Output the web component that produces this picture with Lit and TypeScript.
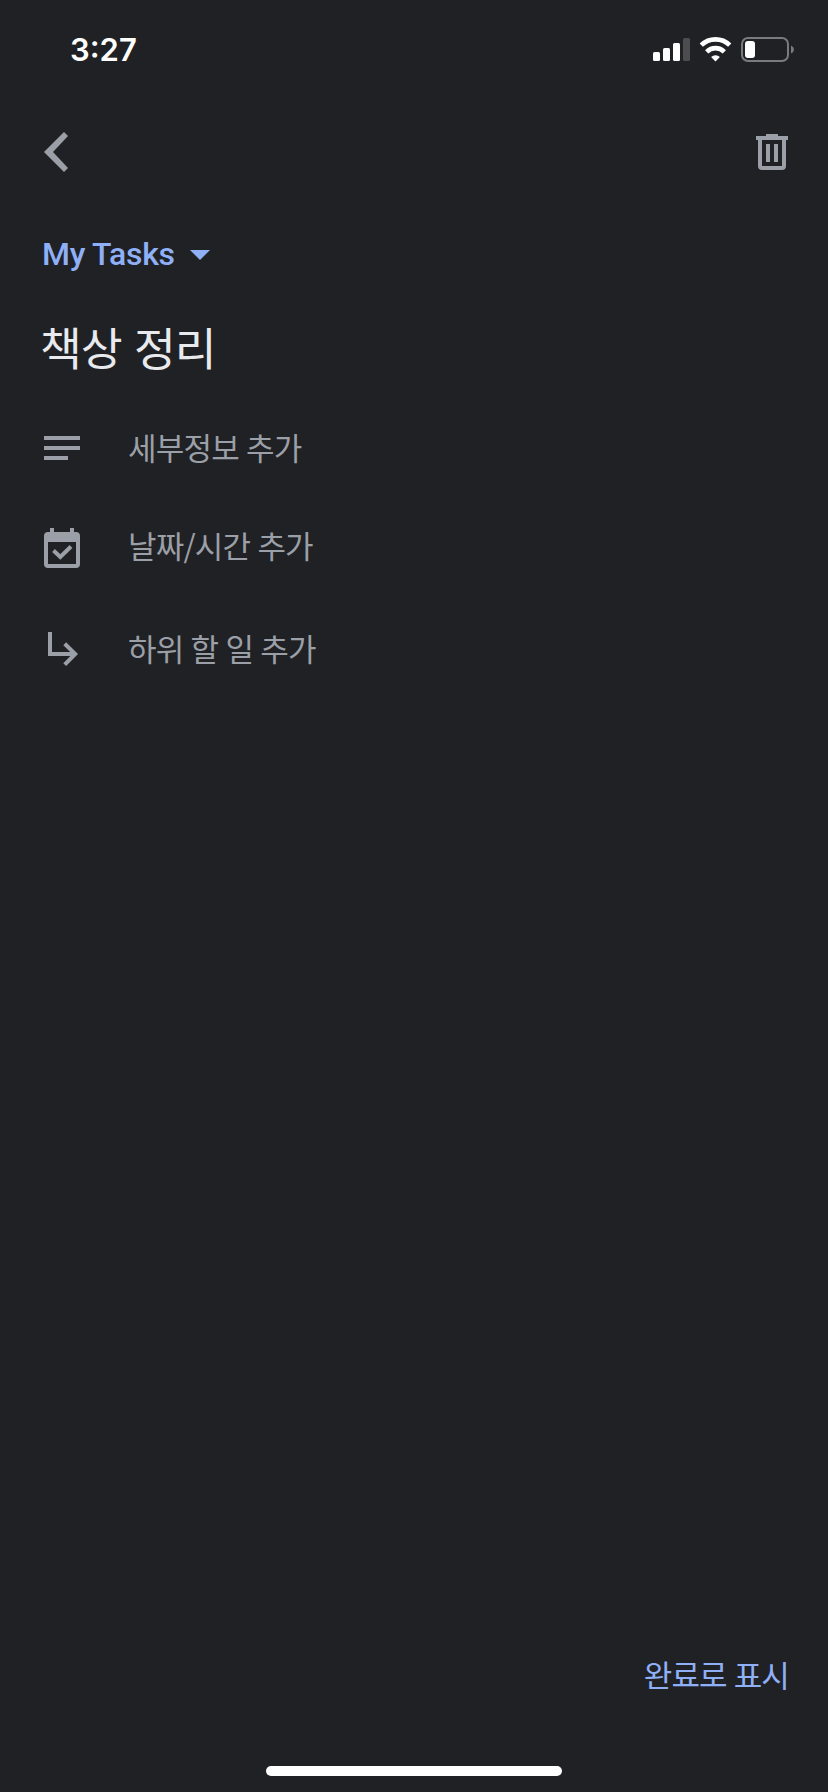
import { LitElement, html, css, svg } from "lit";
import { customElement } from "lit/decorators.js";

const detailsIcon = svg`<path d="M0 8h36v4H0zM0 18h36v4H0zM0 28h24v4H0z"/>`;
const dateIcon = svg`<path fill-rule="evenodd" d="M6 0h4v4h16V0h4v4h2a4 4 0 0 1 4 4v28a4 4 0 0 1-4 4H4a4 4 0 0 1-4-4V8a4 4 0 0 1 4-4h2zM4 14v22h28V14z"/><path class="line" d="M9.5 22.5l6.8 6.4L27 18.5"/>`;
const subtaskIcon = svg`<path class="line" d="M6 4v22h25M20.7 15.7L31.2 26 20.7 36.6"/>`;

@customElement("app-root")
export class AppRoot extends LitElement {
  static styles = css`
    :host {
      display: flex;
      flex-direction: column;
      box-sizing: border-box;
      height: 1792px;
      width: 828px;
      background: #202124;
      color: #9aa0a6;
      font-family: Inter, "Noto Sans CJK KR", sans-serif;
    }
    * { box-sizing: border-box; }
    svg { display: block; fill: currentColor; overflow: visible; }
    .line { fill: none; stroke: currentColor; stroke-width: 4; }
    button {
      border: 0; padding: 0; margin: 0; background: none;
      color: #9b9fa7; font: inherit; display: block; text-align: left;
    }
    .status {
      height: 100px; display: flex; justify-content: space-between;
      padding: 30px 34px 0 70px; color: #fff;
    }
    .time { font-size: 31px; font-weight: 600; line-height: 40px; }
    .status svg { margin-top: 7px; }
    .bar {
      height: 104px; display: flex; justify-content: space-between;
      align-items: center; padding: 0 40px 0 44px;
    }
    .list {
      height: 100px; display: flex; align-items: center; gap: 16px;
      padding-left: 42px; color: #8fb0f6;
      font-family: "Google Sans", Roboto, sans-serif;
      font-size: 32px; font-weight: 500; letter-spacing: -0.3px; white-space: nowrap;
    }
    .list span { width: 132px; }
    .list svg { margin-top: 2px; }
    h1 {
      margin: 0; height: 94px; padding-left: 40px; color: #e8eaed;
      font-family: "Noto Sans CJK KR", sans-serif;
      font-weight: 400; font-size: 45.5px; line-height: 85px; letter-spacing: -1px;
      word-spacing: 3px; white-space: pre;
    }
    .row {
      display: flex; align-items: center; gap: 48px; padding-left: 44px;
      height: 100px; width: 100%; font-family: "Noto Sans CJK KR", sans-serif;
      font-size: 31px; line-height: 44px; letter-spacing: -0.8px; word-spacing: 1px; white-space: pre;
    }
    .details span { padding-bottom: 3px; }
    .date span { padding-bottom: 6px; }
    .subtask span { padding-bottom: 0; }
    .footer {
      margin-top: auto; height: 140px; display: flex; flex-direction: column;
      align-items: flex-end; justify-content: space-between; padding-bottom: 16px;
    }
    .done {
      color: #8fb0f6; font-family: "Noto Sans CJK KR", sans-serif;
      font-size: 31px; line-height: 44px; letter-spacing: -0.9px; word-spacing: 1px;
      margin-right: 39px; white-space: pre;
    }
    .home { width: 296px; height: 10px; border-radius: 5px; background: #fff; align-self: center; }
  `;

  private row(kind: string, icon: unknown, label: string) {
    return html`<button class="row ${kind}">
      <svg width="36" height="40" viewBox="0 0 36 40">${icon}</svg><span>${label}</span>
    </button>`;
  }

  render() {
    return html`
      <div class="status">
        <span class="time">3:27</span>
        <svg width="141" height="25" viewBox="653 37 141 25">
          <rect x="653" y="52" width="7" height="9" rx="1.5"/>
          <rect x="663" y="48" width="7" height="13" rx="1.5"/>
          <rect x="673" y="43" width="7" height="18" rx="1.5"/>
          <rect x="683" y="38" width="7" height="23" rx="1.5" fill="#4d4d50"/>
          <g fill="none" stroke="#fff" stroke-width="4.6">
            <path d="M701.3 45.2a20.2 20.2 0 0 1 28.4 0"/>
            <path d="M706.7 51.8a12.4 12.4 0 0 1 17.6 0"/>
          </g>
          <path d="M715.5 61.5l-4.4-4.5a6.5 6.5 0 0 1 8.8 0z"/>
          <rect x="742" y="38" width="46" height="23" rx="6" fill="none" stroke="#7b7b7e" stroke-width="2"/>
          <rect x="745" y="41" width="10" height="17" rx="3"/>
          <path d="M791 45.5q3 1.3 3 4t-3 4z" fill="#7b7b7e"/>
        </svg>
      </div>
      <div class="bar">
        <button aria-label="뒤로"><svg width="24" height="40" viewBox="0 0 24 40"><path d="M20 0l4 4L9 20l15 16-4 4L0 20z"/></svg></button>
        <button aria-label="삭제"><svg width="32" height="36" viewBox="0 0 32 36"><path fill-rule="evenodd" d="M10 0h12v2h10v4h-2v26a4 4 0 0 1-4 4H6a4 4 0 0 1-4-4V6H0V2h10zM6 6v26h20V6zM10 10h4v18h-4zM18 10h4v18h-4z"/></svg></button>
      </div>
      <button class="list"><span>My Tasks</span><svg width="20" height="10" viewBox="0 0 20 10"><path d="M0 0h20L10 10z"/></svg></button>
      <h1>책상 정리</h1>
      ${this.row("details", detailsIcon, "세부정보 추가")}
      ${this.row("date", dateIcon, "날짜/시간 추가")}
      ${this.row("subtask", subtaskIcon, "하위 할 일 추가")}
      <div class="footer">
        <button class="done">완료로 표시</button>
        <div class="home"></div>
      </div>
    `;
  }
}
